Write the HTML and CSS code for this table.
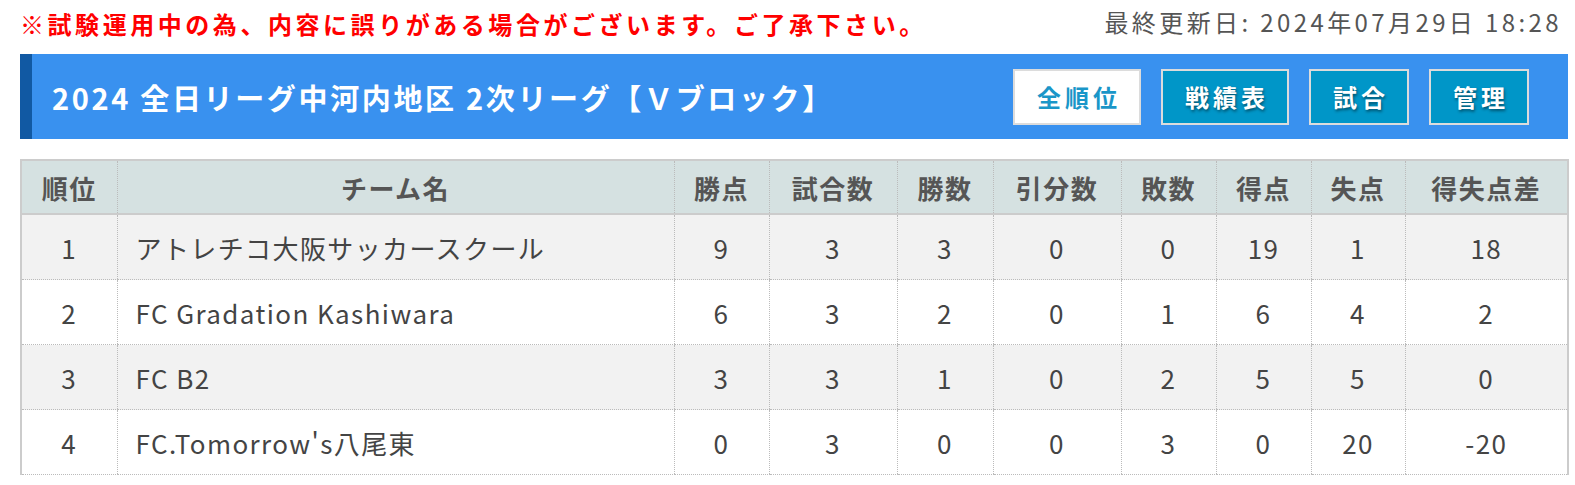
FILE: index.html
```html
<!DOCTYPE html>
<html lang="ja">
<head>
<meta charset="utf-8">
<title>順位表</title>
<link rel="stylesheet" href="styles.css">
</head>
<body>
<div class="page">
  <div class="topline">
    <p class="notice">※試験運用中の為、内容に誤りがある場合がございます。ご了承下さい。</p>
    <p class="updated">最終更新日: 2024年07月29日 18:28</p>
  </div>
  <div class="titlebar">
    <h1 class="title">2024 全日リーグ中河内地区 2次リーグ【Ｖブロック】</h1>
    <nav class="btns">
      <a class="btn btn-active">全順位</a>
      <a class="btn">戦績表</a>
      <a class="btn">試合</a>
      <a class="btn">管理</a>
    </nav>
  </div>
  <table class="standings">
    <colgroup>
      <col class="c-rank"><col class="c-team"><col class="c2"><col class="c3"><col class="c2b"><col class="c3"><col class="c2"><col class="c2"><col class="c2c"><col class="c4">
    </colgroup>
    <thead>
      <tr><th>順位</th><th>チーム名</th><th>勝点</th><th>試合数</th><th>勝数</th><th>引分数</th><th>敗数</th><th>得点</th><th>失点</th><th>得失点差</th></tr>
    </thead>
    <tbody>
      <tr><td>1</td><td class="team">アトレチコ大阪サッカースクール</td><td>9</td><td>3</td><td>3</td><td>0</td><td>0</td><td>19</td><td>1</td><td>18</td></tr>
      <tr><td>2</td><td class="team">FC Gradation Kashiwara</td><td>6</td><td>3</td><td>2</td><td>0</td><td>1</td><td>6</td><td>4</td><td>2</td></tr>
      <tr><td>3</td><td class="team">FC B2</td><td>3</td><td>3</td><td>1</td><td>0</td><td>2</td><td>5</td><td>5</td><td>0</td></tr>
      <tr><td>4</td><td class="team">FC.Tomorrow's八尾東</td><td>0</td><td>3</td><td>0</td><td>0</td><td>3</td><td>0</td><td>20</td><td>-20</td></tr>
    </tbody>
  </table>
</div>
</body>
</html>
```

FILE: styles.css
```css
html, body {
  margin: 0;
  padding: 0;
  background: #fff;
}
body {
  font-family: "Noto Sans CJK JP", "Noto Sans", sans-serif;
  font-size: 24px;
  color: #444;
  letter-spacing: 3.6px;
}
.page {
  width: 1548px;
  padding: 0 7px 0 20px;
}
.topline {
  display: flex;
  justify-content: space-between;
  align-items: center;
  height: 50px;
  padding-bottom: 4px;
}
.notice {
  margin: 0;
  color: #ff0000;
  font-weight: bold;
  font-size: 24px;
  letter-spacing: 3.55px;
  line-height: 34px;
  margin-bottom: 3px;
}
.updated {
  margin: 0 6px 6px 0;
  color: #555;
  font-size: 24px;
  line-height: 34px;
  letter-spacing: 3.4px;
}
.titlebar {
  display: flex;
  align-items: center;
  justify-content: space-between;
  height: 85px;
  background: #3991ef;
  border-left: 12px solid #1159a3;
  box-sizing: border-box;
  padding: 0 39px 0 20px;
}
.title {
  margin: 0;
  color: #fff;
  font-size: 29px;
  font-weight: bold;
  letter-spacing: 2.65px;
  line-height: 38px;
}
.btns {
  display: flex;
  gap: 20px;
  margin-top: 1px;
}
.btn {
  display: block;
  box-sizing: border-box;
  height: 56px;
  padding: 0 18px 0 22px;
  border: 2px solid #dcdcdc;
  background: #0096c8;
  color: #fff;
  font-size: 24px;
  font-weight: bold;
  line-height: 52px;
  letter-spacing: 4px;
  text-shadow: 1px 2px 3px rgba(0, 0, 0, 0.45);
}
.btn-active {
  background: #fff;
  color: #1a96c8;
  text-shadow: none;
}
.standings {
  margin-top: 20px;
  width: 1547px;
  table-layout: fixed;
  border-collapse: collapse;
  border-top: 2px solid #cccccc;
  border-left: 2px solid #cccccc;
  border-right: 2px solid #cccccc;
}
.c-rank { width: 96px; }
.c-team { width: 557px; }
.c2 { width: 95px; }
.c2b { width: 96px; }
.c2c { width: 94px; }
.c3 { width: 128px; }
.c4 { width: 163px; }
.standings th {
  background: #d5e1e1;
  color: #555;
  font-size: 26px;
  font-weight: bold;
  letter-spacing: 1.5px;
  height: 52px;
  padding: 0;
  text-align: center;
  border-bottom: 2px solid #cccccc;
  border-left: 1px dotted #bbbbbb;
}
.standings td {
  height: 64px;
  padding: 0;
  font-size: 26px;
  letter-spacing: 1.4px;
  text-align: center;
  border-bottom: 1px dotted #bbbbbb;
  border-left: 1px dotted #bbbbbb;
}
.standings tbody tr:nth-child(odd) td {
  background: #f2f2f2;
}
.standings td.team {
  text-align: left;
  padding-left: 18px;
}
```
